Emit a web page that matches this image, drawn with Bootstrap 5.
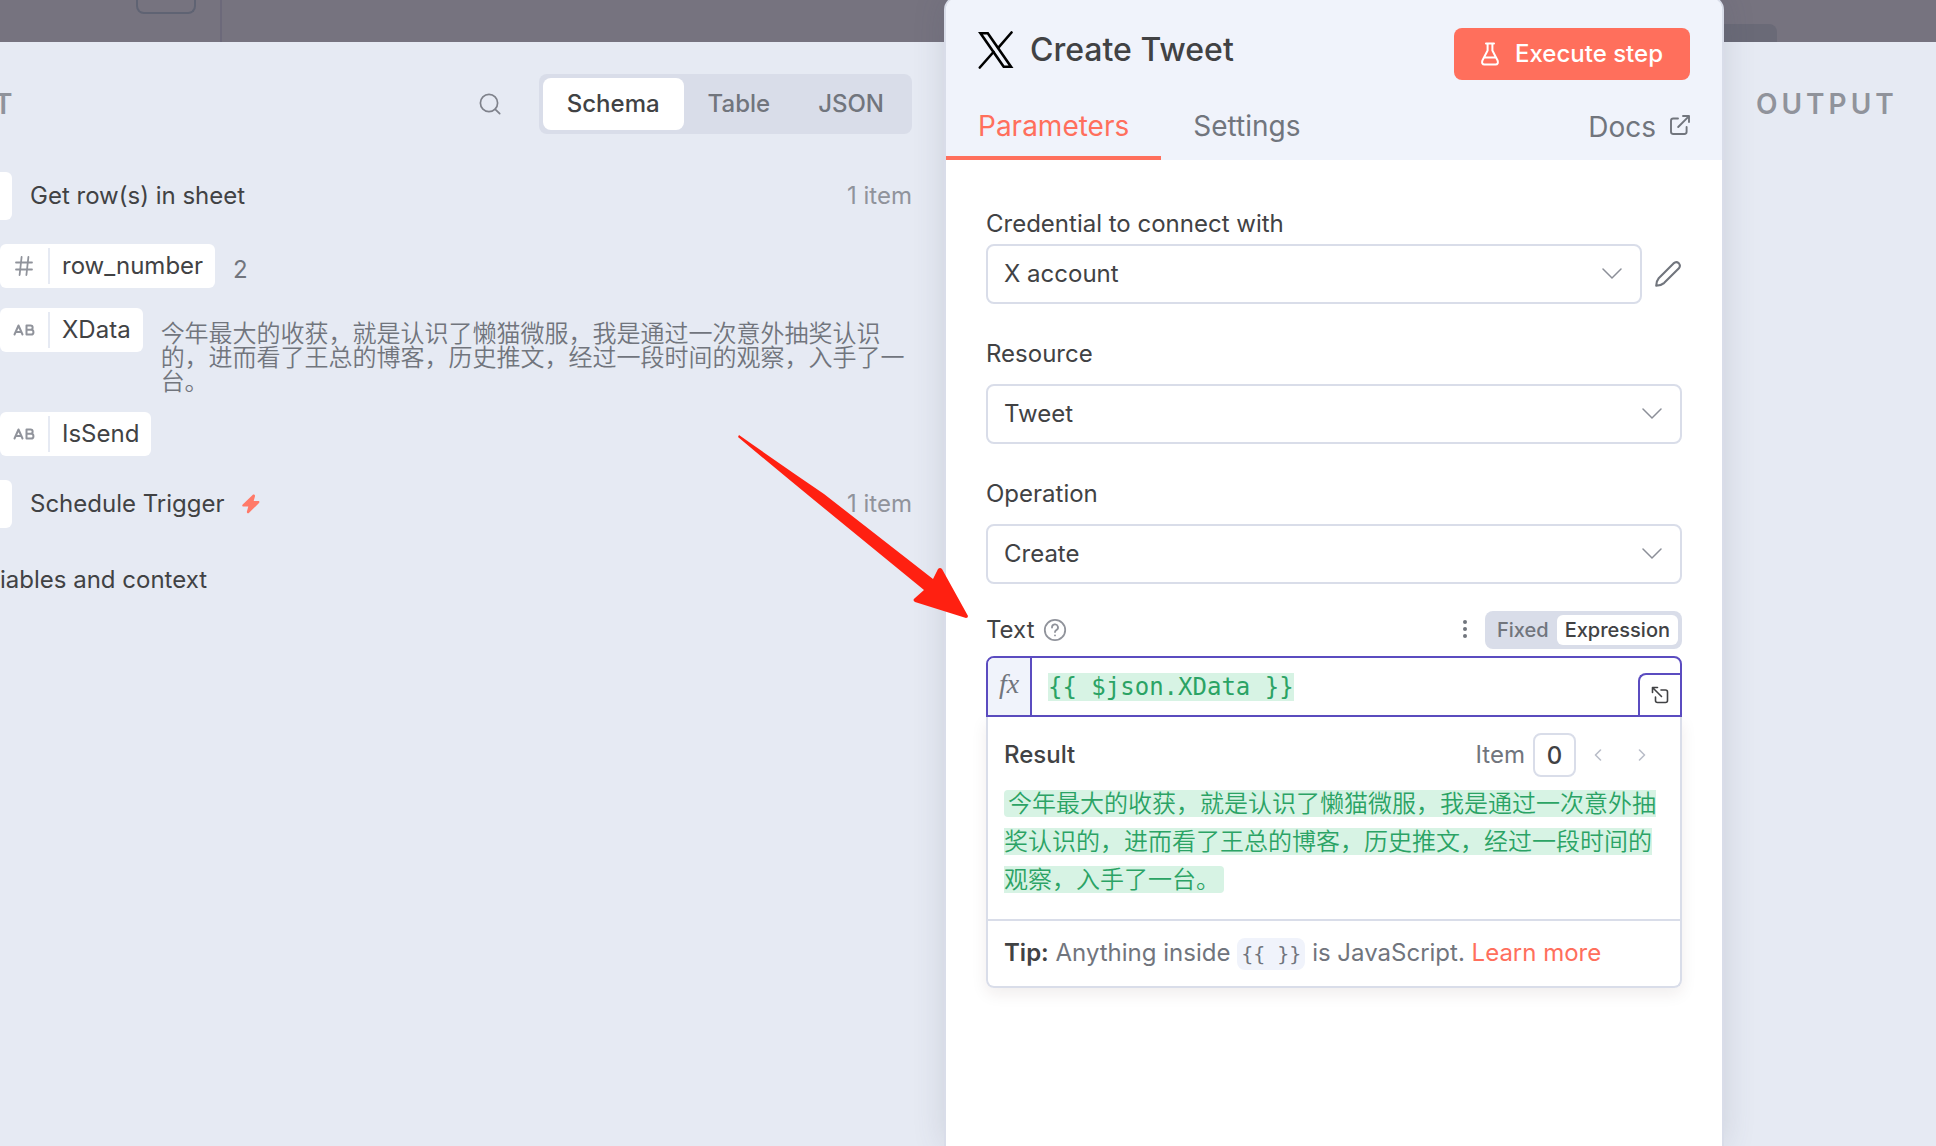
<!DOCTYPE html>
<html lang="en">
<head>
<meta charset="utf-8">
<meta name="viewport" content="width=device-width, initial-scale=1">
<title>Create Tweet</title>
<link href="https://cdn.jsdelivr.net/npm/bootstrap@5.3.0/dist/css/bootstrap.min.css" rel="stylesheet">
<style>
  :root {
    --ink: #414244; --ink-mid: #71757d; --ink-soft: #90939b;
    --line: #d9dde9; --panel: #e6eaf3; --tint: #f0f3fb;
    --brand: #ff6f5c; --focus: #5b4cc0; --ok: #2ba365; --ok-bg: #d7f3e4;
    --cjk: "Noto Sans CJK SC";
  }
  body { font-family: Inter, var(--cjk), sans-serif; font-size: 24px; line-height: 32px; color: var(--ink); background: #76737f; }
  button, input, select { font-family: inherit; color: inherit; }
  svg { display: block; flex: none; fill: none; stroke: currentColor; stroke-linecap: round; stroke-linejoin: round; }
  svg.solid { fill: currentColor; stroke: none; }
  .plain-btn { border: 0; background: none; padding: 0; }
  .mono { font-family: "DejaVu Sans Mono", monospace; }
  .mid { color: var(--ink-mid); }
  .count { color: var(--ink-soft); }
  .gap-row { gap: 18px; }

  /* dimmed canvas that shows above the panels */
  .backdrop-bar { height: 42px; }
  .ghost-box { width: 60px; height: 14px; margin-left: 136px; border: 2px solid #5f6373; border-top: 0; border-radius: 0 0 8px 8px; }
  .ghost-line { width: 2px; margin-left: 24px; background: #6c697a; }
  .ghost-btn { width: 180px; height: 18px; margin-right: 159px; background: #6a6a77; border-radius: 0 8px 0 0; }

  .workspace { min-height: 100vh; }
  .side-panel { margin-top: 42px; padding-top: 32px; background: var(--panel); }
  .input-panel { margin-left: -36px; padding-right: 32px; min-width: 0; }
  .output-panel { width: 212px; padding-left: 32px; }
  .side-title { font-size: 28px; font-weight: 600; letter-spacing: 4px; line-height: 60px; color: var(--ink-soft); }
  .input-title { padding-left: 30px; }
  .search-btn { margin-right: 38px; color: #7f828b; }

  .seg { padding: 4px; border-radius: 8px; background: var(--line); }
  .seg button { border: 0; background: none; border-radius: 8px; padding: 0 24px; line-height: 52px; font-weight: 500; color: var(--ink-mid); }
  .seg button.on { background: #fff; color: var(--ink); }
  .seg-sm button { font-size: 20px; line-height: 30px; padding: 0 8px; border-radius: 6px; }

  .schema { margin-top: 38px; }
  .node-row { height: 48px; }
  .node-icon { width: 48px; height: 48px; border-radius: 6px; background: #fff; }
  .bolt { color: #ff7a68; }
  .fields { padding: 24px 0 24px 36px; display: flex; flex-direction: column; gap: 20px; }
  .pill { height: 44px; border-radius: 6px; background: #fff; flex: none; }
  .pill-type { width: 48px; color: var(--ink-soft); }
  .pill-name { border-left: 2px solid var(--panel); padding: 0 12px; line-height: 36px; }
  .val { color: var(--ink-mid); line-height: 24px; padding-top: 14px; margin-bottom: -2px; }
  .cjk-text { font-weight: 350; }
  .more-row { padding: 36px 0 0 36px; }

  .node-panel { width: 780px; margin-top: -4px; border: 2px solid var(--line); border-bottom: 0; border-radius: 14px 14px 0 0; background: #fff; box-shadow: 0 0 32px rgba(68, 72, 100, .16); z-index: 1; }
  .node-head { height: 162px; padding: 30px 32px 0; background: var(--tint); border-radius: 12px 12px 0 0; }
  .node-name { font-size: 32px; font-weight: 500; line-height: 44px; margin: 0; }
  .x-logo { color: #000; }
  .btn-run { --bs-btn-color: #fff; --bs-btn-bg: var(--brand); --bs-btn-hover-color: #fff; --bs-btn-hover-bg: #f0614e; --bs-btn-border-width: 0; width: 236px; height: 52px; padding: 0; font-size: 24px; font-weight: 500; border-radius: 8px; }
  .tabs { margin: 24px -32px 0; }
  .tabs button, .docs { height: 56px; padding: 4px 32px 12px; font-size: 28px; line-height: 36px; color: var(--ink-mid); text-decoration: none; }
  .tabs button { border: 0; border-bottom: 4px solid transparent; background: none; }
  .tabs button.on { color: var(--brand); border-color: var(--brand); }
  .docs { gap: 14px; padding-top: 2px; }

  .node-body { padding: 44px 40px 0; }
  .field-label { line-height: 40px; }
  .field-gap { margin-top: 30px; }
  .field-gap .field-label { margin-bottom: 10px; }
  .pick { height: 60px; padding: 0 56px 0 16px; border: 2px solid var(--line); border-radius: 8px; font-size: 24px; color: var(--ink);
    background: #fff url("data:image/svg+xml,%3Csvg xmlns='http://www.w3.org/2000/svg' viewBox='0 0 20 12'%3E%3Cpath d='M1 1l9 9 9-9' fill='none' stroke='%238c8f98' stroke-width='1.5' stroke-linecap='round'/%3E%3C/svg%3E") no-repeat right 18px center / 20px 12px; }
  .text-row { height: 40px; margin: 26px 0 6px; }

  .expr { height: 61px; border: 2px solid var(--focus); border-radius: 8px 8px 0 0; }
  .fx { width: 44px; border-right: 2px solid var(--focus); background: var(--tint); border-radius: 6px 0 0 0; font-family: "Liberation Serif", serif; font-style: italic; font-size: 28px; line-height: 52px; color: var(--ink-mid); }
  .expr-code { padding-left: 16px; line-height: 58px; color: var(--ok); }
  .hl { background: var(--ok-bg); }
  .expand { width: 42px; height: 44px; margin-bottom: -2px; border: 0 solid var(--focus); border-width: 2px 0 2px 2px; border-radius: 8px 0 0 0; background: #fff; }

  .result { border: 2px solid var(--line); border-top: 0; border-radius: 0 0 8px 8px; box-shadow: 0 6px 16px rgba(68, 28, 23, .08); }
  .result-main { padding: 16px 16px 20px; }
  .item-box { width: 43px; height: 44px; margin-left: 8px; border: 2px solid var(--line); border-radius: 8px; font-weight: 500; text-align: center; padding: 0; }
  .step-btn { width: 44px; height: 44px; color: #b9bdc8; }
  .result-text { margin: 8px 0 0; font-family: "Liberation Sans", var(--cjk), sans-serif; line-height: 38px; color: var(--ok); }
  .result-text .hl { padding: 0 4px; border-radius: 4px; }
  .tip { border-top: 2px solid var(--line); padding: 16px; color: var(--ink-mid); }
  .tip b { font-weight: 600; color: var(--ink); }
  .tip a { color: var(--brand); text-decoration: none; }
  .braces { font-size: 20px; background: var(--tint); border-radius: 8px; padding: 4px; }
  .pointer-arrow { left: 736px; top: 434px; color: #ff2011; pointer-events: none; z-index: 2; }
</style>
<script src="https://cdn.jsdelivr.net/npm/bootstrap@5.3.0/dist/js/bootstrap.bundle.min.js"></script>
</head>
<body>
<div class="workspace position-relative d-flex overflow-hidden">
  <div class="backdrop-bar position-absolute top-0 start-0 w-100 d-flex">
    <div class="ghost-box"></div>
    <div class="ghost-line"></div>
    <div class="ghost-btn ms-auto align-self-end"></div>
  </div>

  <section class="side-panel input-panel flex-fill position-relative">
    <div class="d-flex align-items-center">
      <div class="side-title input-title">T</div>
      <button class="plain-btn search-btn ms-auto" type="button" aria-label="Search">
        <svg width="22" height="22" viewBox="0 0 22 22" stroke-width="1.7"><circle cx="10" cy="10" r="8.6"/><path d="M16.3 16.3l4.4 4.4"/></svg>
      </button>
      <div class="seg d-flex">
        <button class="on" type="button">Schema</button>
        <button type="button">Table</button>
        <button type="button">JSON</button>
      </div>
    </div>

    <div class="schema">
      <div class="node-row d-flex align-items-center gap-row">
        <div class="node-icon"></div>
        <span>Get row(s) in sheet</span>
        <span class="count ms-auto">1 item</span>
      </div>
      <div class="fields">
        <div class="d-flex align-items-start gap-row">
          <div class="pill d-flex align-items-center">
            <span class="pill-type d-flex justify-content-center"><svg width="18" height="20" viewBox="0 0 18 20" stroke-width="1.8"><path d="M1 6.5h16M1 13.5h16M6.6 1L4.6 19M13.4 1l-2 18"/></svg></span>
            <span class="pill-name">row_number</span>
          </div>
          <div class="val">2</div>
        </div>
        <div class="d-flex align-items-start gap-row">
          <div class="pill d-flex align-items-center">
            <span class="pill-type d-flex justify-content-center"><svg width="22" height="12" viewBox="0 0 22 12" stroke-width="2"><path d="M1.5 10.5L5.5 1.5l4 9M3 8h5M13.5 1.5h4a2.1 2.1 0 0 1 0 4.3h-4zM13.5 5.8h4.6a2.3 2.3 0 0 1 0 4.7h-4.6z"/></svg></span>
            <span class="pill-name">XData</span>
          </div>
          <div class="val cjk-text" lang="zh-CN">今年最大的收获，就是认识了懒猫微服，我是通过一次意外抽奖认识的，进而看了王总的博客，历史推文，经过一段时间的观察，入手了一台。</div>
        </div>
        <div class="d-flex">
          <div class="pill d-flex align-items-center">
            <span class="pill-type d-flex justify-content-center"><svg width="22" height="12" viewBox="0 0 22 12" stroke-width="2"><path d="M1.5 10.5L5.5 1.5l4 9M3 8h5M13.5 1.5h4a2.1 2.1 0 0 1 0 4.3h-4zM13.5 5.8h4.6a2.3 2.3 0 0 1 0 4.7h-4.6z"/></svg></span>
            <span class="pill-name">IsSend</span>
          </div>
        </div>
      </div>
      <div class="node-row d-flex align-items-center gap-row">
        <div class="node-icon"></div>
        <span class="d-flex align-items-center gap-3">Schedule Trigger
          <svg class="solid bolt" width="20" height="20" viewBox="0 0 20 20"><path d="M11.600.9L1.700 10.400c-.9 1-.4 2 .7 2h4.900L5.900 17.600c-.3 1.500 1.200 2.200 2.200 1.100l9.900-9.700c.8-.9.4-2-.7-2h-4.600L14 2.200c.3-1.500-1.300-2.300-2.400-1.300z"/></svg>
        </span>
        <span class="count ms-auto">1 item</span>
      </div>
      <div class="more-row">iables and context</div>
    </div>
  </section>

  <main class="node-panel flex-shrink-0">
    <header class="node-head">
      <div class="d-flex align-items-start">
        <div class="d-flex align-items-center gap-3">
          <svg class="x-logo" width="36" height="38" viewBox="0 0 36 38" stroke-width="2"><path d="M2.500 2.200h7.300l23.200 33.600h-7.300z" stroke-width="2.600" stroke-linejoin="miter"/><path d="M33.500 1.500L20.200 16.800M15.500 21L1.800 36.500" stroke-width="2.600"/></svg>
          <h1 class="node-name">Create Tweet</h1>
        </div>
        <button class="btn btn-run ms-auto d-flex align-items-center justify-content-center" type="button">
          <svg class="me-3" width="18" height="24" viewBox="0 0 18 24" stroke-width="2"><path d="M5 1.500h8M6.600 1.500v7L1.400 18.500Q.4 22.500 3.400 22.500h11.200q3 0 2-4L11.400 8.500v-7M4 15.500h10"/></svg>Execute step
        </button>
      </div>
      <div class="tabs d-flex">
        <button class="on" type="button">Parameters</button>
        <button type="button">Settings</button>
        <a class="docs ms-auto d-flex align-items-center" href="#">Docs
          <svg class="mb-1" width="20" height="20" viewBox="0 0 20 20" stroke-width="1.900"><path d="M8 3.500H3.300Q1 3.500 1 5.800v11Q1 19 3.300 19h11q2.300 0 2.300-2.200V12M8.200 12L19 1.200M13 1h6v6"/></svg>
        </a>
      </div>
    </header>

    <form class="node-body" onsubmit="return false">
      <label class="field-label d-block" for="cred">Credential to connect with</label>
      <div class="d-flex align-items-center">
        <select class="form-select pick" id="cred"><option>X account</option></select>
        <button class="plain-btn ms-2 ps-1" type="button" aria-label="Edit credential">
          <svg class="mid" width="28" height="28" viewBox="0 0 28 28" stroke-width="2.100"><path d="M2.200 25.800q.2-5 2.500-7.600L19.500 3.400q2.700-2.300 5.200-.3 2.300 2.500.2 5.200L10 23.100q-3.200 2.600-7.800 2.700z"/></svg>
        </button>
      </div>

      <div class="field-gap">
        <label class="field-label d-block" for="res">Resource</label>
        <select class="form-select pick" id="res"><option>Tweet</option></select>
      </div>
      <div class="field-gap">
        <label class="field-label d-block" for="op">Operation</label>
        <select class="form-select pick" id="op"><option>Create</option></select>
      </div>

      <div class="text-row d-flex align-items-center">
        <label for="expr-result">Text</label>
        <svg class="ms-2 count" width="24" height="24" viewBox="0 0 24 24" stroke-width="1.800"><circle cx="12" cy="12" r="10.200"/><path d="M9 9.500a3 3 0 1 1 4.300 2.600Q12 12.800 12 14"/><path d="M12 17.300v.1"/></svg>
        <button class="plain-btn ms-auto me-3 mid" type="button" aria-label="Options">
          <svg class="solid" width="8" height="22" viewBox="0 0 8 22"><circle cx="4" cy="3" r="2"/><circle cx="4" cy="10" r="2"/><circle cx="4" cy="17" r="2"/></svg>
        </button>
        <div class="seg seg-sm d-flex">
          <button type="button">Fixed</button>
          <button class="on" type="button">Expression</button>
        </div>
      </div>

      <div class="expr d-flex">
        <div class="fx text-center">fx</div>
        <div class="expr-code mono flex-fill"><span class="hl">{{ $json.XData }}</span></div>
        <button class="expand align-self-end d-flex align-items-center justify-content-center p-0" type="button" aria-label="Expand editor">
          <svg width="18" height="18" viewBox="0 0 18 18" stroke-width="1.600"><path d="M1.500 6.500v-5h5M2 2l8.500 8.500M10 4h4.500Q16.500 4 16.500 6v8.500q0 2-2 2H6.500q-2 0-2-2V11"/></svg>
        </button>
      </div>
      <div class="result">
        <div class="result-main">
          <div class="d-flex align-items-center">
            <span class="fw-medium me-auto" style="font-weight: 500">Result</span>
            <label for="item-no" class="mid">Item</label>
            <input class="item-box" id="item-no" type="text" value="0">
            <button class="plain-btn step-btn d-flex align-items-center justify-content-center" type="button" aria-label="Previous"><svg width="8" height="12" viewBox="0 0 8 12" stroke-width="1.600"><path d="M6.500 1L1.500 6l5 5"/></svg></button>
            <button class="plain-btn step-btn d-flex align-items-center justify-content-center" type="button" aria-label="Next"><svg width="8" height="12" viewBox="0 0 8 12" stroke-width="1.600"><path d="M1.500 1l5 5-5 5"/></svg></button>
          </div>
          <p class="result-text cjk-text" lang="zh-CN"><output class="hl d-inline" id="expr-result">今年最大的收获，就是认识了懒猫微服，我是通过一次意外抽奖认识的，进而看了王总的博客，历史推文，经过一段时间的观察，入手了一台。</output></p>
        </div>
        <div class="tip"><b>Tip:</b> Anything inside <span class="braces mono">{{ }}</span> is JavaScript. <a href="#">Learn more</a></div>
      </div>
    </form>
  </main>

  <aside class="side-panel output-panel flex-shrink-0 position-relative">
    <div class="side-title">OUTPUT</div>
  </aside>

  <svg class="solid pointer-arrow position-absolute" width="234" height="186" viewBox="0 0 234 186" aria-hidden="true"><path d="M3 1Q44 30 88 60L197 145l5-10q2-2 4 0l26 47q0 2-2 2L179 168q-3-2 0-4l9-8L78 66Q40 35 2 3z"/></svg>
</div>
</body>
</html>
